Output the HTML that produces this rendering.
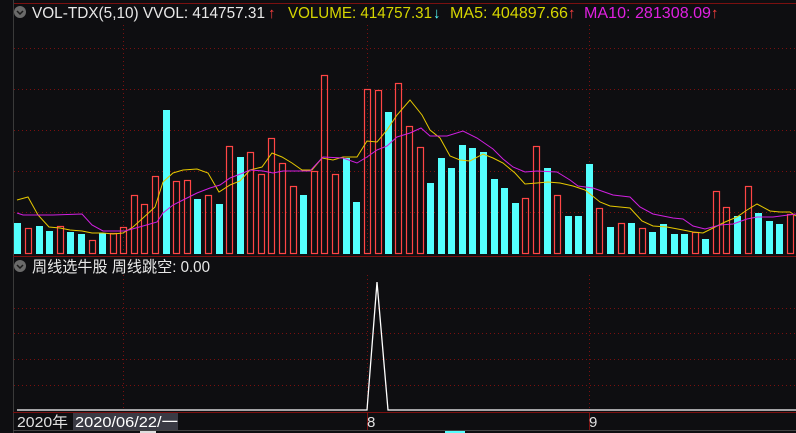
<!DOCTYPE html>
<html><head><meta charset="utf-8"><style>
html,body{margin:0;padding:0;background:#0e0e11;width:796px;height:433px;overflow:hidden}
svg{display:block}
text{font-family:"Liberation Sans","Noto Sans CJK SC",sans-serif}
</style></head><body>
<svg width="796" height="433" viewBox="0 0 796 433" xmlns="http://www.w3.org/2000/svg">
<rect width="796" height="433" fill="#0e0e11"/>
<line x1="13" y1="3.5" x2="796" y2="3.5" stroke="#7a1010"/>
<line x1="13.5" y1="0" x2="13.5" y2="433" stroke="#3a3a3a"/>
<g stroke="#7a1010" stroke-dasharray="1,3" stroke-width="1">
<line x1="14" y1="48.5" x2="796" y2="48.5"/>
<line x1="14" y1="89.5" x2="796" y2="89.5"/>
<line x1="14" y1="130.5" x2="796" y2="130.5"/>
<line x1="14" y1="171.5" x2="796" y2="171.5"/>
<line x1="14" y1="212.5" x2="796" y2="212.5"/>
<line x1="123.5" y1="25" x2="123.5" y2="255"/>
<line x1="367.5" y1="25" x2="367.5" y2="255"/>
<line x1="589.5" y1="25" x2="589.5" y2="255"/>
<line x1="14" y1="308.5" x2="796" y2="308.5"/>
<line x1="14" y1="333.5" x2="796" y2="333.5"/>
<line x1="14" y1="359.5" x2="796" y2="359.5"/>
<line x1="14" y1="385.5" x2="796" y2="385.5"/>
<line x1="123.5" y1="275" x2="123.5" y2="410"/>
<line x1="367.5" y1="275" x2="367.5" y2="410"/>
<line x1="589.5" y1="275" x2="589.5" y2="410"/>
</g>
<line x1="13" y1="256.5" x2="796" y2="256.5" stroke="#7a1010"/>
<g fill="#54fffe">
<rect x="14" y="223" width="7" height="31"/><rect x="36" y="226" width="7" height="28"/><rect x="46" y="231" width="7" height="23"/>
<rect x="67" y="232" width="7" height="22"/><rect x="78" y="234" width="7" height="20"/><rect x="99" y="233" width="7" height="21"/>
<rect x="163" y="110" width="7" height="144"/><rect x="194" y="199" width="7" height="55"/><rect x="216" y="204" width="7" height="50"/>
<rect x="237" y="157" width="7" height="97"/><rect x="300" y="195" width="7" height="59"/><rect x="343" y="158" width="7" height="96"/>
<rect x="353" y="202" width="7" height="52"/><rect x="385" y="112" width="7" height="142"/><rect x="427" y="183" width="7" height="71"/>
<rect x="438" y="158" width="7" height="96"/><rect x="448" y="168" width="7" height="86"/><rect x="459" y="145" width="7" height="109"/>
<rect x="469" y="148" width="7" height="106"/><rect x="480" y="152" width="7" height="102"/><rect x="491" y="179" width="7" height="75"/>
<rect x="501" y="188" width="7" height="66"/><rect x="512" y="203" width="7" height="51"/><rect x="544" y="168" width="7" height="86"/>
<rect x="565" y="216" width="7" height="38"/><rect x="575" y="216" width="7" height="38"/><rect x="586" y="164" width="7" height="90"/>
<rect x="607" y="227" width="7" height="27"/><rect x="628" y="223" width="7" height="31"/><rect x="649" y="232" width="7" height="22"/>
<rect x="660" y="224" width="7" height="30"/><rect x="671" y="234" width="7" height="20"/><rect x="681" y="234" width="7" height="20"/>
<rect x="702" y="239" width="7" height="15"/><rect x="734" y="216" width="7" height="38"/><rect x="755" y="213" width="7" height="41"/>
<rect x="766" y="221" width="7" height="33"/><rect x="776" y="224" width="7" height="30"/>
</g>
<g fill="none" stroke="#ff4545" stroke-width="1.2">
<rect x="25.5" y="228.5" width="6" height="25"/><rect x="57.5" y="226.5" width="6" height="27"/><rect x="89.5" y="240.5" width="6" height="13"/>
<rect x="110.5" y="233.5" width="6" height="20"/><rect x="120.5" y="227.5" width="6" height="26"/><rect x="131.5" y="195.5" width="6" height="58"/>
<rect x="141.5" y="204.5" width="6" height="49"/><rect x="152.5" y="176.5" width="6" height="77"/><rect x="173.5" y="181.5" width="6" height="72"/>
<rect x="184.5" y="180.5" width="6" height="73"/><rect x="205.5" y="195.5" width="6" height="58"/><rect x="226.5" y="146.5" width="6" height="107"/>
<rect x="247.5" y="152.5" width="6" height="101"/><rect x="258.5" y="174.5" width="6" height="79"/><rect x="268.5" y="138.5" width="6" height="115"/>
<rect x="279.5" y="163.5" width="6" height="90"/><rect x="290.5" y="186.5" width="6" height="67"/><rect x="311.5" y="171.5" width="6" height="82"/>
<rect x="321.5" y="75.5" width="6" height="178"/><rect x="332.5" y="174.5" width="6" height="79"/><rect x="364.5" y="89.5" width="6" height="164"/>
<rect x="375.5" y="90.5" width="6" height="163"/><rect x="395.5" y="83.5" width="6" height="170"/><rect x="406.5" y="126.5" width="6" height="127"/>
<rect x="417.5" y="147.5" width="6" height="106"/><rect x="522.5" y="198.5" width="6" height="55"/><rect x="533.5" y="146.5" width="6" height="107"/>
<rect x="554.5" y="195.5" width="6" height="58"/><rect x="596.5" y="208.5" width="6" height="45"/><rect x="618.5" y="223.5" width="6" height="30"/>
<rect x="639.5" y="228.5" width="6" height="25"/><rect x="692.5" y="232.5" width="6" height="21"/><rect x="713.5" y="191.5" width="6" height="62"/>
<rect x="723.5" y="207.5" width="6" height="46"/><rect x="745.5" y="186.5" width="6" height="67"/><rect x="787.5" y="214.5" width="6" height="39"/>
</g>
<polyline fill="none" stroke="#e6c800" stroke-width="1" points="17,200 28,197 38,215 49,227 60,228 70,230 82,231 92,233 103,233 113,234 123,233 133,227 143,218 155,207 163,182 173,173 183,170 197,169 208,173 219,192 230,185 240,181 250,170 262,167 272,153 282,157 292,163 302,170 312,170 322,158 333,160 343,157 357,157 367,141 377,142 387,130 397,115 410,100 422,115 430,130 440,138 450,156 460,160 470,161 483,154 493,158 503,163 515,173 525,184 537,183 548,182 560,183 573,186 585,190 600,202 610,206 620,207 630,208 642,221 653,226 667,227 683,230 693,232 703,233 713,228 725,222 737,217 747,210 757,204 770,211 780,212 790,212 796,216"/>
<polyline fill="none" stroke="#d020e0" stroke-width="1" points="17,213 23,215 53,215 82,214 92,225 103,231 125,231 143,226 157,222 163,213 173,205 183,200 197,193 210,188 220,185 230,178 243,173 250,170 263,171 273,173 283,171 310,171 323,157 343,158 357,163 367,157 377,150 387,146 397,137 410,133 421,128 430,136 447,136 463,131 477,138 493,149 503,159 513,167 525,172 537,171 557,172 570,180 578,186 593,188 613,195 630,197 640,207 653,214 673,218 683,219 693,226 705,229 720,225 733,224 747,219 757,217 773,217 796,214"/>
<circle cx="20" cy="12" r="6" fill="#6a6a6a"/>
<path d="M17 11 L20 14 L23 11" fill="none" stroke="#1a1a1a" stroke-width="1.5"/>
<text x="32" y="18" font-size="15.5" fill="#e8e8e8" textLength="233" lengthAdjust="spacingAndGlyphs">VOL-TDX(5,10) VVOL: 414757.31</text>
<text x="268" y="18" font-size="15" fill="#ff4040">↑</text>
<text x="288" y="18" font-size="15.5" fill="#d6d600" textLength="144" lengthAdjust="spacingAndGlyphs">VOLUME: 414757.31</text>
<text x="433" y="18" font-size="15" fill="#54fffe">↓</text>
<text x="450" y="18" font-size="15.5" fill="#d6d600" textLength="118" lengthAdjust="spacingAndGlyphs">MA5: 404897.66</text>
<text x="568" y="18" font-size="15" fill="#ff4040">↑</text>
<text x="584" y="18" font-size="15.5" fill="#e020e0" textLength="127" lengthAdjust="spacingAndGlyphs">MA10: 281308.09</text>
<text x="711" y="18" font-size="15" fill="#ff4040">↑</text>
<circle cx="20" cy="266" r="6" fill="#6a6a6a"/>
<path d="M17 265 L20 268 L23 265" fill="none" stroke="#1a1a1a" stroke-width="1.5"/>
<text x="32" y="272" font-size="15.5" fill="#e8e8e8" textLength="178" lengthAdjust="spacingAndGlyphs">周线选牛股 周线跳空: 0.00</text>
<polyline fill="none" stroke="#ffffff" stroke-width="1.3" points="17,410 367,410 377,282 388,410 796,410"/>
<line x1="13" y1="412.5" x2="796" y2="412.5" stroke="#7a1010"/>
<g stroke="#7a1010"><line x1="367.5" y1="413" x2="367.5" y2="430"/><line x1="589.5" y1="413" x2="589.5" y2="430"/></g>
<rect x="73" y="413" width="105" height="17" fill="#3a3a44"/>
<text x="17" y="427" font-size="15" fill="#e0e0e0" textLength="51" lengthAdjust="spacingAndGlyphs">2020年</text>
<text x="75" y="427" font-size="15" fill="#ffffff" textLength="103" lengthAdjust="spacingAndGlyphs">2020/06/22/一</text>
<text x="367" y="427" font-size="15" fill="#e0e0e0">8</text>
<text x="589" y="427" font-size="15" fill="#e0e0e0">9</text>
<line x1="13" y1="430.5" x2="796" y2="430.5" stroke="#444"/>
<rect x="140" y="431" width="16" height="2" fill="#ddd"/><rect x="445" y="431" width="20" height="2" fill="#54fffe"/>
</svg>
</body></html>
